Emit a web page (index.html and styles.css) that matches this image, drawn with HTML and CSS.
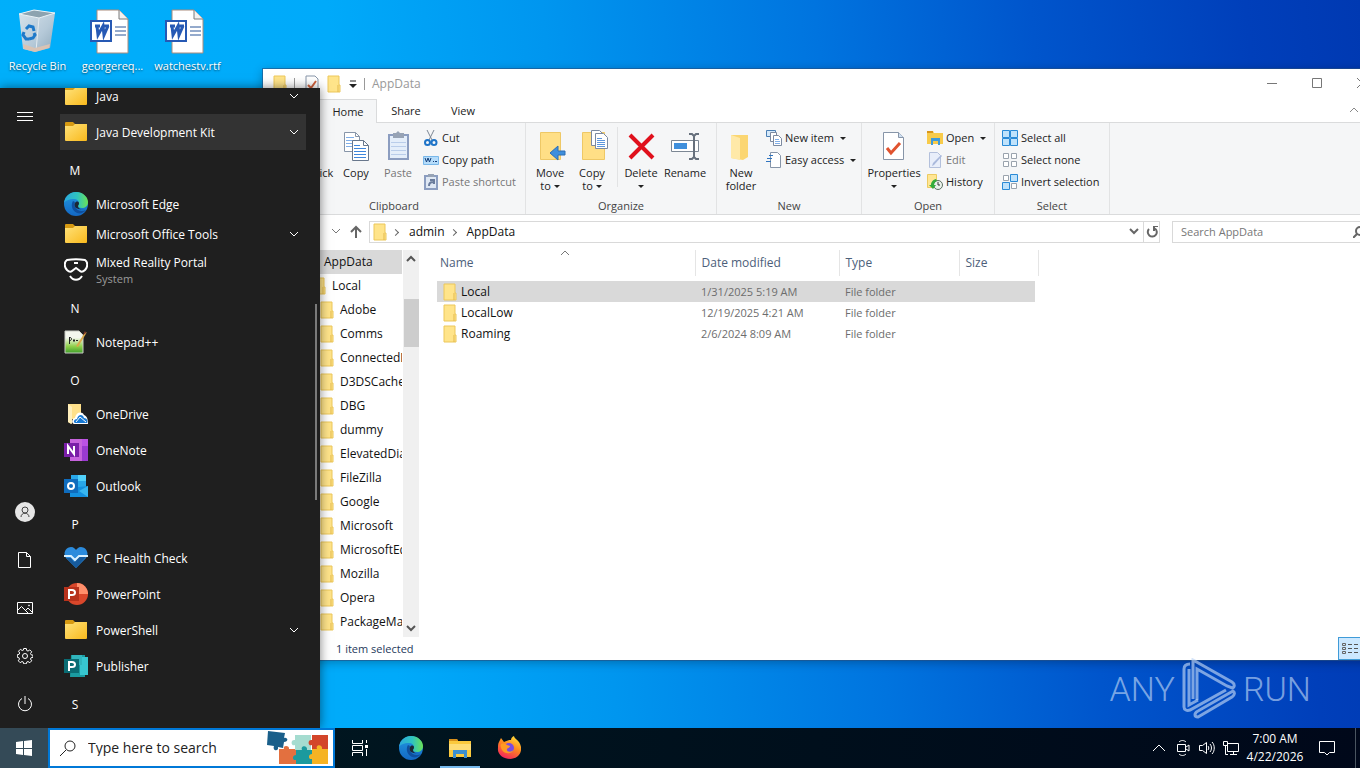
FILE: index.html
```html
<!DOCTYPE html>
<html lang="en">
<head>
    <meta charset="UTF-8" />
    <meta name="viewport" content="width=device-width, initial-scale=1.0" />
    <title>Desktop</title>
    <link rel="stylesheet" href="styles.css">
</head>
<body>
    <!-- Shared icons -->
    <svg class="defs" width="0" height="0" aria-hidden="true">
        <defs>
            <linearGradient id="gFolder" x1="0" y1="0" x2="1" y2="1">
                <stop offset="0" stop-color="#ffe27a" /><stop offset="1" stop-color="#f9b91c" />
            </linearGradient>
            <linearGradient id="gEdgeTop" x1="0" y1="0" x2="1" y2="0">
                <stop offset="0" stop-color="#2ba8dd" /><stop offset="0.55" stop-color="#2fc4c0" /><stop offset="1" stop-color="#6be255" />
            </linearGradient>
            <linearGradient id="gEdgeLeft" x1="0" y1="0" x2="0" y2="1">
                <stop offset="0" stop-color="#2299e0" /><stop offset="1" stop-color="#1368c4" />
            </linearGradient>
            <linearGradient id="gFox" x1="0.8" y1="0" x2="0.3" y2="1">
                <stop offset="0" stop-color="#ffe23c" /><stop offset="0.45" stop-color="#ff8a1e" /><stop offset="1" stop-color="#f4215c" />
            </linearGradient>
            <linearGradient id="gBin" x1="0" y1="0" x2="1" y2="1">
                <stop offset="0" stop-color="#d8e4ec" /><stop offset="0.6" stop-color="#b5c9d8" /><stop offset="1" stop-color="#8fa9bb" />
            </linearGradient>
            <linearGradient id="gNpp" x1="0" y1="0" x2="0" y2="1">
                <stop offset="0.3" stop-color="#f4f7ee" /><stop offset="0.7" stop-color="#8fd04a" /><stop offset="1" stop-color="#3f9e2b" />
            </linearGradient>
        </defs>
        <symbol id="folder" viewBox="0 0 24 24">
            <path d="M1 3a1 1 0 0 1 1-1h7l2 2h11a1 1 0 0 1 1 1v13H1z" fill="#d79a12" />
            <path d="M1 6h8l2-2h12v16a1 1 0 0 1-1 1H2a1 1 0 0 1-1-1z" fill="url(#gFolder)" />
        </symbol>
        <symbol id="sfolder" viewBox="0 0 14 18">
            <path d="M1 1h11v9h1v7H1z" fill="#ffe48a" stroke="#ecc75a" />
            <path d="M11 10v7" stroke="#e3b94c" />
        </symbol>
        <symbol id="edge" viewBox="0 0 24 24">
            <circle cx="12" cy="12" r="12" fill="url(#gEdgeLeft)" />
            <path d="M0 11C1 4 6 0 12 0c7 0 12 5 12 10 0 4-3 6-6 6-3 0-4-1-4-2s1-1 1-3-2-4-5-4C5 7 1 9 0 11z" fill="url(#gEdgeTop)" />
            <path d="M9 9c-2 3-2 9 4 12 3 1 7 0 9-3-4 2-9 1-11-3-1-2-1-3 0-5z" fill="#0f4f9e" />
            <path d="M12 10c-2 1-2 4 0 6 2 1 6 2 9 1-3 1-7 0-7-3 0-1 1-1 1-3 0-1-2-2-3-1z" fill="#1b2733" />
        </symbol>
        <symbol id="chev" viewBox="0 0 10 10">
            <path d="M1 3l4 4 4-4" fill="none" stroke="currentColor" />
        </symbol>
        <symbol id="word" viewBox="0 0 40 46">
            <path d="M7 2h22l9 9v34H7z" fill="#fff" stroke="#a98b7c" />
            <path d="M29 2v9h9" fill="#f1f1f1" stroke="#7b7b7b" />
            <path d="M25 19h11M25 23h11M25 27h11" stroke="#2b579a" />
            <rect x="1" y="13" width="20" height="20" fill="#fff" stroke="#2659b4" stroke-width="2" />
            <path d="M5 18h5M13 18h6M7 18l1 9 5-9 1 9 4-9" fill="none" stroke="#2659b4" stroke-width="3" />
        </symbol>
    </svg>

    <main class="desktop">
        <div class="shortcuts">
            <a href="#" class="shortcut">
                <svg viewBox="0 0 40 46">
                    <path d="M1 6l15-4 21 3-5 35-15 4-12-3z" fill="url(#gBin)" />
                    <path d="M1 6l15-4 21 3-16 5z" fill="#8da3b0" stroke="#e9f1f6" />
                    <path d="M21 10l-3 33" stroke="#e4ebf0" />
                    <path d="M5 36l12 4 15-4-1 4-14 4-11-3z" fill="#d9c3b4" />
                    <path d="M8 21l3-3 4 1 1 4M6 24l-1 3 3 4h3M16 25l1 2-2 3-4 1" fill="none" stroke="#1e79c9" stroke-width="3" />
                </svg>
                <span>Recycle Bin</span>
            </a>
            <a href="#" class="shortcut document">
                <svg viewBox="0 0 40 46"><use href="#word" /></svg>
                <span>georgereq...</span>
            </a>
            <a href="#" class="shortcut document">
                <svg viewBox="0 0 40 46"><use href="#word" /></svg>
                <span>watchestv.rtf</span>
            </a>
        </div>

        <!-- File Explorer -->
        <section class="explorer">
            <header class="titlebar">
                <svg class="sfolder" viewBox="0 0 14 18"><use href="#sfolder" /></svg>
                <i class="bar"></i>
                <svg class="props" viewBox="0 0 14 18">
                    <path d="M1 1h9l3 3v13H1z" fill="#fff" stroke="#8795a8" />
                    <path d="M3 10l3 3 5-7" fill="none" stroke="#d0623e" stroke-width="2" />
                </svg>
                <svg class="sfolder" viewBox="0 0 14 18"><use href="#sfolder" /></svg>
                <svg class="customize" viewBox="0 0 8 8"><path d="M1 1h6" stroke="#222" /><path d="M0 4h8l-4 4z" fill="#222" /></svg>
                <i class="bar"></i>
                <h1>AppData</h1>
                <div class="window-buttons">
                    <button type="button" aria-label="Minimize"><svg viewBox="0 0 10 10"><path d="M0 5.5h10" /></svg></button>
                    <button type="button" aria-label="Maximize"><svg viewBox="0 0 10 10"><path d="M.5.5h9v9h-9z" /></svg></button>
                    <button type="button" aria-label="Close"><svg viewBox="0 0 10 10"><path d="M0 0l10 10M10 0L0 10" /></svg></button>
                </div>
            </header>

            <nav class="tabs">
                <button type="button" class="tab file">File</button>
                <button type="button" class="tab active">Home</button>
                <button type="button" class="tab">Share</button>
                <button type="button" class="tab">View</button>
                <button type="button" class="collapse" aria-label="Minimize the Ribbon"><svg viewBox="0 0 10 10"><path d="M1 7l4-4 4 4" fill="none" stroke="#888" /></svg></button>
            </nav>

            <div class="ribbon">
                <div class="group clipboard">
                    <div class="tools">
                        <button type="button" class="big pin"><svg viewBox="0 0 32 32"><path d="M20 4l8 8-4 1-5 5-1 6-9-9 6-1 5-5z" fill="#5b9bd5" /></svg>Pin to Quick<br>access</button>
                        <button type="button" class="big">
                            <svg viewBox="0 0 32 32">
                                <path d="M4.500 2.500h11l4 4v15h-15z" fill="#fff" stroke="#8795a8" />
                                <path d="M15.500 2.500v4h4" fill="none" stroke="#8795a8" />
                                <path d="M6 7.500h8M6 10.500h10M6 13.500h6M6 16.500h6" stroke="#7faee8" />
                                <path d="M12.500 10.500h11l5 5v15h-16z" fill="#fff" stroke="#68778c" />
                                <path d="M23.500 10.500v5h5" fill="none" stroke="#68778c" />
                                <path d="M14 15.500h6M14 18.500h12M14 21.500h12M14 24.500h12M14 27.500h12" stroke="#3d86dc" />
                            </svg>
                            Copy
                        </button>
                        <button type="button" class="big off">
                            <svg viewBox="0 0 32 32">
                                <rect x="7" y="5" width="19" height="24" fill="#e4eefa" stroke="#8b9dc0" stroke-width="2" />
                                <path d="M11 3h3l2-2 2 2h4v5H11z" fill="#97a3b5" />
                                <path d="M9 12.500h15M9 16.500h15M9 20.500h15M9 24.500h15" stroke="#b9cdea" />
                            </svg>
                            Paste
                        </button>
                        <div class="stack">
                            <button type="button" class="small"><svg viewBox="0 0 16 16"><path d="M4 0l5 10M11 0L6 10" stroke="#7c8794" /><circle cx="4.500" cy="12.500" r="2.500" fill="none" stroke="#1f74c8" stroke-width="2" /><circle cx="11" cy="12.500" r="2.500" fill="none" stroke="#1f74c8" stroke-width="2" /></svg>Cut</button>
                            <button type="button" class="small"><svg viewBox="0 0 16 16"><path d="M.5 4.500h15v8H.5z" fill="#b5dcfa" stroke="#79b8ea" /><path d="M2 6l1.500 4 1.500-4 1.500 4L8 6M10 9.500h1M12 9.500h2" fill="none" stroke="#123c78" /></svg>Copy path</button>
                            <button type="button" class="small off"><svg viewBox="0 0 16 16"><path d="M2 2h12v13H2z" fill="#dfe8f4" stroke="#8b9dc0" stroke-width="2" /><path d="M5 0h6v3H5z" fill="#97a3b5" /><path d="M6 12c0-3 1-4 4-4M7 6h4v4" fill="none" stroke="#6a7c9c" stroke-width="2" /></svg>Paste shortcut</button>
                        </div>
                    </div>
                    <p>Clipboard</p>
                </div>

                <div class="group organize">
                    <div class="tools">
                        <button type="button" class="big">
                            <svg viewBox="0 0 32 32"><path d="M6.500 2.500h20v27h-20z" fill="#ffdf86" stroke="#eec866" /><path d="M31 21h-7v-5l-8 7 8 7v-5h7z" fill="#3f8fdc" stroke="#2f6fb4" /></svg>
                            Move<br>to <i class="caret"></i>
                        </button>
                        <button type="button" class="big">
                            <svg viewBox="0 0 32 32"><path d="M6.500 2.500h22v27h-22z" fill="#ffdf86" stroke="#eec866" /><path d="M15.500.5h8l3 3v12h-11z" fill="#fff" stroke="#7c8aa0" /><path d="M19.500 3.500h8l4 4v11h-12z" fill="#fff" stroke="#7c8aa0" /><path d="M21 8.500h5M21 10.500h8M21 12.500h8M21 14.500h8M21 16.500h8" stroke="#5d97dd" /></svg>
                            Copy<br>to <i class="caret"></i>
                        </button>
                        <i class="divider"></i>
                        <button type="button" class="big">
                            <svg viewBox="0 0 32 32"><path d="M5 5l23 23M28 5L5 28" stroke="#e0101c" stroke-width="4" /></svg>
                            Delete<br><i class="caret"></i>
                        </button>
                        <button type="button" class="big rename">
                            <svg viewBox="0 0 32 32"><path d="M2.500 10.500h27v11h-27z" fill="#fff" stroke="#7c8794" /><path d="M5 13h13v6H5z" fill="#3f8fdc" /><path d="M20 4h3l2 2 2-2h3M25 6v21M20 29h3l2-2 2 2h3" fill="none" stroke="#66707c" stroke-width="2" /></svg>
                            Rename
                        </button>
                    </div>
                    <p>Organize</p>
                </div>

                <div class="group new">
                    <div class="tools">
                        <button type="button" class="big">
                            <svg viewBox="0 0 32 32"><path d="M6 5h17v22l-5 3-12-2z" fill="#fbd672" /><path d="M6 5l9 3v22l-9-2z" fill="#ffe9a8" /></svg>
                            New<br>folder
                        </button>
                        <div class="stack">
                            <button type="button" class="small"><svg viewBox="0 0 16 16"><path d="M.5.500h9v6h-9z" fill="#d5e9fa" stroke="#4b7fb4" /><path d="M4.500 2.500h6v9h-6z" fill="#fff" stroke="#7c8aa0" /><path d="M7.500 5.500h5l3 3v7h-8z" fill="#fff" stroke="#7c8aa0" /><path d="M9 9.500h4M9 11.500h5M9 13.500h5" stroke="#7faee8" /></svg>New item <i class="caret"></i></button>
                            <button type="button" class="small"><svg viewBox="0 0 16 16"><path d="M4.500.5h7l3 3v12h-10z" fill="#fff" stroke="#8795a8" /><path d="M7 3.500H3M6 6.500H1M5 9.500H0" stroke="#2f74c0" /></svg>Easy access <i class="caret"></i></button>
                        </div>
                    </div>
                    <p>New</p>
                </div>

                <div class="group open">
                    <div class="tools">
                        <button type="button" class="big wide">
                            <svg viewBox="0 0 32 32"><path d="M5.500 2.500h15l5 5v22h-20z" fill="#fff" stroke="#8795a8" /><path d="M20.500 2.500v5h5" fill="#cfe0f2" stroke="#8795a8" /><path d="M9 18l4 5 9-10" fill="none" stroke="#e0532f" stroke-width="3" /></svg>
                            Properties<br><i class="caret"></i>
                        </button>
                        <div class="stack">
                            <button type="button" class="small"><svg viewBox="0 0 16 16"><path d="M0 1h6l1 2h9v11H0z" fill="#f8cb4a" /><path d="M0 1h6v2H0z" fill="#d9961a" /><path d="M4 15V8h9v7h-2v-4H6v4z" fill="#3f9ad8" /></svg>Open <i class="caret"></i></button>
                            <button type="button" class="small off"><svg viewBox="0 0 16 16"><path d="M2.500.5h8l3 3v12h-11z" fill="#e8eefa" stroke="#b3c0dc" /><path d="M15 4L7 13l-2 1 1-3 8-8z" fill="#a9b9dc" /></svg>Edit</button>
                            <button type="button" class="small"><svg viewBox="0 0 16 16"><path d="M.5.5h9v13h-9z" fill="#ffe694" stroke="#eccb62" /><circle cx="11" cy="11" r="4.500" fill="#e9f1ea" stroke="#5c6f62" /><path d="M11 8v3h2" fill="none" stroke="#333" /><path d="M9 5c-4 1-5 4-5 6H2l4 4 3-4H7c0-2 1-3 3-4z" fill="#34ac3a" /></svg>History</button>
                        </div>
                    </div>
                    <p>Open</p>
                </div>

                <div class="group select">
                    <div class="tools">
                        <div class="stack">
                            <button type="button" class="small"><svg viewBox="0 0 16 16"><path d="M.5.5h7v7h-7zM8.500.5h7v7h-7zM.5 8.500h7v7h-7zM8.500 8.500h7v7h-7z" fill="#bfe2fb" stroke="#2a8ad6" /></svg>Select all</button>
                            <button type="button" class="small"><svg viewBox="0 0 16 16"><path d="M1.500 1.500h5v5h-5zM9.500 1.500h5v5h-5zM1.500 9.500h5v5h-5zM9.500 9.500h5v5h-5z" fill="#fff" stroke="#9aa3ad" /></svg>Select none</button>
                            <button type="button" class="small"><svg viewBox="0 0 16 16"><path d="M1.500 1.500h5v5h-5zM9.500 9.500h5v5h-5z" fill="#fff" stroke="#9aa3ad" /><path d="M8.500.5h7v7h-7zM.5 8.500h7v7h-7z" fill="#bfe2fb" stroke="#2a8ad6" /></svg>Invert selection</button>
                        </div>
                    </div>
                    <p>Select</p>
                </div>
            </div>

            <div class="address">
                <button type="button" class="recent" aria-label="Recent locations"><svg viewBox="0 0 10 10"><use href="#chev" /></svg></button>
                <button type="button" class="up" aria-label="Up"><svg viewBox="0 0 12 14"><path d="M6 13V2M1 7l5-5 5 5" fill="none" stroke="#666" stroke-width="2" /></svg></button>
                <div class="path">
                    <svg class="sfolder" viewBox="0 0 14 18"><use href="#sfolder" /></svg>
                    <i class="sep"></i><a href="#">admin</a><i class="sep"></i><a href="#">AppData</a>
                    <button type="button" class="drop" aria-label="Previous locations"><svg viewBox="0 0 10 10"><path d="M1 3l4 4 4-4" fill="none" stroke="#666" stroke-width="2" /></svg></button>
                    <button type="button" class="refresh" aria-label="Refresh"><svg viewBox="0 0 12 12"><path d="M3 3a4.500 4.500 0 1 0 6-0.500" fill="none" stroke="#666" stroke-width="2" /><path d="M7 0h5v1H9v4H7z" fill="#666" /></svg></button>
                </div>
                <div class="find">
                    <input type="search" placeholder="Search AppData" aria-label="Search AppData">
                    <svg viewBox="0 0 12 12"><circle cx="7" cy="5" r="4" fill="none" stroke="#666" stroke-width="2" /><path d="M4 8l-4 4" stroke="#666" stroke-width="2" /></svg>
                </div>
            </div>

            <div class="panes">
                <ul class="tree">
                    <li class="level1 current"><a href="#">AppData</a></li>
                    <li class="level2"><a href="#"><svg class="sfolder" viewBox="0 0 14 18"><use href="#sfolder" /></svg>Local</a></li>
                    <li><a href="#"><svg class="sfolder" viewBox="0 0 14 18"><use href="#sfolder" /></svg>Adobe</a></li>
                    <li><a href="#"><svg class="sfolder" viewBox="0 0 14 18"><use href="#sfolder" /></svg>Comms</a></li>
                    <li><a href="#"><svg class="sfolder" viewBox="0 0 14 18"><use href="#sfolder" /></svg>ConnectedDevicesPlatform</a></li>
                    <li><a href="#"><svg class="sfolder" viewBox="0 0 14 18"><use href="#sfolder" /></svg>D3DSCache</a></li>
                    <li><a href="#"><svg class="sfolder" viewBox="0 0 14 18"><use href="#sfolder" /></svg>DBG</a></li>
                    <li><a href="#"><svg class="sfolder" viewBox="0 0 14 18"><use href="#sfolder" /></svg>dummy</a></li>
                    <li><a href="#"><svg class="sfolder" viewBox="0 0 14 18"><use href="#sfolder" /></svg>ElevatedDiagnostics</a></li>
                    <li><a href="#"><svg class="sfolder" viewBox="0 0 14 18"><use href="#sfolder" /></svg>FileZilla</a></li>
                    <li><a href="#"><svg class="sfolder" viewBox="0 0 14 18"><use href="#sfolder" /></svg>Google</a></li>
                    <li><a href="#"><svg class="sfolder" viewBox="0 0 14 18"><use href="#sfolder" /></svg>Microsoft</a></li>
                    <li><a href="#"><svg class="sfolder" viewBox="0 0 14 18"><use href="#sfolder" /></svg>MicrosoftEdge</a></li>
                    <li><a href="#"><svg class="sfolder" viewBox="0 0 14 18"><use href="#sfolder" /></svg>Mozilla</a></li>
                    <li><a href="#"><svg class="sfolder" viewBox="0 0 14 18"><use href="#sfolder" /></svg>Opera</a></li>
                    <li><a href="#"><svg class="sfolder" viewBox="0 0 14 18"><use href="#sfolder" /></svg>PackageManagement</a></li>
                </ul>
                <div class="scrollbar">
                    <svg viewBox="0 0 10 10"><path d="M1 7l4-4 4 4" fill="none" stroke="#555" stroke-width="2" /></svg>
                    <div class="thumb"></div>
                    <svg viewBox="0 0 10 10"><path d="M1 3l4 4 4-4" fill="none" stroke="#555" stroke-width="2" /></svg>
                </div>
                <div class="files">
                    <table>
                        <thead>
                            <tr>
                                <th class="name">Name<svg class="sort" viewBox="0 0 10 10"><path d="M1 7l4-4 4 4" fill="none" stroke="#777" /></svg></th>
                                <th class="date">Date modified</th>
                                <th class="type">Type</th>
                                <th class="size">Size</th>
                            </tr>
                        </thead>
                        <tbody>
                            <tr class="selected">
                                <td><a href="#"><svg class="sfolder" viewBox="0 0 14 18"><use href="#sfolder" /></svg>Local</a></td>
                                <td>1/31/2025 5:19 AM</td><td>File folder</td><td></td>
                            </tr>
                            <tr>
                                <td><a href="#"><svg class="sfolder" viewBox="0 0 14 18"><use href="#sfolder" /></svg>LocalLow</a></td>
                                <td>12/19/2025 4:21 AM</td><td>File folder</td><td></td>
                            </tr>
                            <tr>
                                <td><a href="#"><svg class="sfolder" viewBox="0 0 14 18"><use href="#sfolder" /></svg>Roaming</a></td>
                                <td>2/6/2024 8:09 AM</td><td>File folder</td><td></td>
                            </tr>
                        </tbody>
                    </table>
                </div>
            </div>

            <footer class="status">
                <span>1 item selected</span>
                <button type="button" aria-label="Details view">
                    <svg viewBox="0 0 16 14"><path d="M.5 1.500h3v2h-3zM.5 5.500h3v2h-3zM.5 9.500h3v2h-3z" fill="none" stroke="#666" /><path d="M6 2.500h4M6 6.500h4M6 10.500h4M12 2.500h4M12 6.500h4M12 10.500h4" stroke="#555" /></svg>
                </button>
            </footer>
        </section>

        <!-- Watermark -->
        <div class="watermark">
            <span>ANY</span>
            <svg viewBox="0 0 54 62" fill="none" stroke="currentColor" stroke-width="3">
                <path d="M11 41V2l39 22c3 2 3 5 0 6l-5-2-30-17v31" />
                <path d="M8 6c-4 0-6 2-6 5v38c0 3 3 4 6 3l36-20" />
                <path d="M7 11v36l9-5" />
                <path d="M51 33L16 53c-4 2-4 6 0 6l34-20c3-2 3-5 1-6z" />
            </svg>
            <span>RUN</span>
        </div>

        <!-- Start menu -->
        <section class="start-menu">
            <nav class="rail">
                <button type="button" aria-label="Start"><svg viewBox="0 0 16 16"><path d="M0 3.500h16M0 7.500h16M0 11.500h16" /></svg></button>
                <button type="button" class="push" aria-label="Account"><svg class="avatar" viewBox="0 0 20 20"><circle cx="10" cy="10" r="10" fill="#e6e6e6" stroke="none" /><circle cx="10" cy="8" r="3" stroke="#444" /><path d="M6 15c0-5 8-5 8 0" stroke="#444" /></svg></button>
                <button type="button" aria-label="Documents"><svg viewBox="0 0 16 16"><path d="M1.500.5h8l4 4v11h-12zM9.500.5v4h4" /></svg></button>
                <button type="button" aria-label="Pictures"><svg viewBox="0 0 16 16"><path d="M.5 2.500h15v11H.5zM.5 10.500l4-4 7 7M9 10l2-2 4 4" /><circle cx="12" cy="5.500" r=".5" /></svg></button>
                <button type="button" aria-label="Settings"><svg viewBox="0 0 16 16"><path d="M6.700.5h2.600l.4 2 1.300.6 1.800-1.200 1.900 1.900-1.200 1.800.6 1.200 1.900.4v2.100l-1.900.4-.6 1.300 1.200 1.800-1.900 1.900-1.800-1.200-1.300.6-.4 1.700H6.700l-.4-1.700-1.300-.6-1.800 1.200-1.900-1.900L2.500 11l-.6-1.300-1.600-.4V6.700l1.800-.4.6-1.300-1.200-1.800 1.900-1.900L5.200 2.500l1.100-.3z" /><circle cx="8" cy="8" r="2.500" /></svg></button>
                <button type="button" aria-label="Power"><svg viewBox="0 0 16 16"><path d="M8 0v8M5 2.500a6.500 6.500 0 1 0 6 0" /></svg></button>
            </nav>
            <ul class="apps">
                <li><a href="#"><svg viewBox="0 0 24 24"><use href="#folder" /></svg>Java<svg class="chev" viewBox="0 0 10 10"><use href="#chev" /></svg></a></li>
                <li class="hover"><a href="#"><svg viewBox="0 0 24 24"><use href="#folder" /></svg>Java Development Kit<svg class="chev" viewBox="0 0 10 10"><use href="#chev" /></svg></a></li>
                <li class="letter">M</li>
                <li><a href="#"><svg viewBox="0 0 24 24"><use href="#edge" /></svg>Microsoft Edge</a></li>
                <li class="tight"><a href="#"><svg viewBox="0 0 24 24"><use href="#folder" /></svg>Microsoft Office Tools<svg class="chev" viewBox="0 0 10 10"><use href="#chev" /></svg></a></li>
                <li><a href="#">
                    <svg viewBox="0 0 24 24" fill="none" stroke="#fff" stroke-width="2"><path d="M3 2c6-1 12-1 18 0 3 2 3 7 0 10-2 2-4 2-5 1l-4-3-4 3c-1 1-3 1-5-1C0 9 0 4 3 2zM10 5h4M6 18c3 5 9 5 12 0" /></svg>
                    <span>Mixed Reality Portal<small>System</small></span></a></li>
                <li class="letter">N</li>
                <li><a href="#">
                    <svg viewBox="0 0 24 24"><path d="M1 1h14l4 4v18H1z" fill="url(#gNpp)" stroke="#c9ccc4" /><path d="M5.500 7v7M6 7.500c2 0 2 3 0 3M9 10.500h2M12 10.500h2M10 9v3" fill="none" stroke="#222" /><path d="M12 16l8-12 3-2-9 15z" fill="#d9a84a" /><path d="M19 5l2-4 1 2z" fill="#8b3b2a" /></svg>
                    Notepad++</a></li>
                <li class="letter">O</li>
                <li><a href="#">
                    <svg viewBox="0 0 24 24"><path d="M4 2h13v15H8l-1 5-3-2z" fill="#ffe08a" /><path d="M4 2l4 3v17l-4-2z" fill="#ffefbc" /><path d="M10 22c-3-1-2-6 1-6 1-6 7-7 9-3 3 1 4 4 4 9z" fill="#fff" /><path d="M11 21c-2-1-1-4 2-4 1-5 6-5 7-1 3 0 4 3 3 5z" fill="#1779d4" /><path d="M12 20l4-5 6 5" fill="none" stroke="#fff" /></svg>
                    OneDrive</a></li>
                <li><a href="#">
                    <svg viewBox="0 0 24 24"><path d="M6 1h18v22H6z" fill="#c663dc" /><path d="M18 1h6v22h-6z" fill="#9a3ad0" /><path d="M18 1h6v7h-6z" fill="#bb52e4" /><path d="M0 5h15v14H0z" fill="#7a1ea8" /><path d="M4 16V8l6 8V8" fill="none" stroke="#fff" stroke-width="2" /></svg>
                    OneNote</a></li>
                <li><a href="#">
                    <svg viewBox="0 0 24 24"><path d="M7 1h15v12H7z" fill="#28a8ea" /><path d="M14 1h8v6h-8z" fill="#50d0fa" /><path d="M6 13h9l9-1v11H6z" fill="#1490df" /><path d="M15 17l9-5v11z" fill="#38b6f0" /><path d="M0 5h14v14H0z" fill="#0f6cbd" /><circle cx="7" cy="12" r="3" fill="none" stroke="#fff" stroke-width="2" /></svg>
                    Outlook</a></li>
                <li class="letter">P</li>
                <li><a href="#">
                    <svg viewBox="0 0 24 24"><path d="M12 22L2 12C-2 6 3 1 7 1c3 0 4 2 5 3 1-1 2-3 5-3 4 0 9 5 5 11z" fill="#2b8bdc" /><path d="M12 22L2 12h5l3 4 4-5h8z" fill="#165a9c" /><path d="M0 10h7l4 4 4-4h9" fill="none" stroke="#d9f1ff" stroke-width="2" /></svg>
                    PC Health Check</a></li>
                <li><a href="#">
                    <svg viewBox="0 0 24 24"><circle cx="13" cy="12" r="11" fill="#d9472b" /><path d="M13 1a11 11 0 0 1 11 11H13z" fill="#ff8f6b" /><path d="M0 5h15v14H0z" fill="#b7321c" /><path d="M5 17V8h3c4 0 4 5 0 5H5" fill="none" stroke="#fff" stroke-width="2" /></svg>
                    PowerPoint</a></li>
                <li><a href="#"><svg viewBox="0 0 24 24"><use href="#folder" /></svg>PowerShell<svg class="chev" viewBox="0 0 10 10"><use href="#chev" /></svg></a></li>
                <li><a href="#">
                    <svg viewBox="0 0 24 24"><path d="M7 1h14v22H6z" fill="#1a9ba1" /><path d="M16 3h8v18h-8z" fill="#37c6d0" /><path d="M8 1h10v10H8z" fill="#31b5bd" /><path d="M0 5h15v14H0z" fill="#0a6c74" /><path d="M5 17V8h3c4 0 4 5 0 5H5" fill="none" stroke="#fff" stroke-width="2" /></svg>
                    Publisher</a></li>
                <li class="letter">S</li>
                <li class="tight"><a href="#"><span class="blank"></span>Settings</a></li>
            </ul>
            <div class="menu-thumb"></div>
        </section>
    </main>

    <!-- Taskbar -->
    <footer class="taskbar">
        <button type="button" class="start" aria-label="Start"><svg viewBox="0 0 16 16" fill="#fff"><path d="M0 2l7-1v7H0zM8 1l8-1v8H8zM0 9h7v6l-7-1zM8 9h8v7l-8-1z" /></svg></button>
        <div class="search">
            <svg class="lens" viewBox="0 0 16 16"><circle cx="10" cy="6" r="5" fill="none" stroke="#222" /><path d="M6 10l-6 6" stroke="#222" /></svg>
            <input type="text" placeholder="Type here to search" aria-label="Type here to search">
            <svg class="puzzle" viewBox="0 0 64 36">
                <path d="M13 19h5c-2-4 6-4 5 0h9v15H13z" fill="#e3703f" />
                <path d="M29 5h16v15H35c1 4-6 4-4 0h-2v-5c-4 2-5-6 0-5z" fill="#a5dcd0" />
                <path d="M46 5h16v15H46v-5c-4 2-5-6 0-5z" fill="#d3452a" />
                <path d="M30 20h6c-2-5 6-5 5 0h5v14H30v-4c-4 1-4-5 0-5z" fill="#1b9a9e" />
                <path d="M46 19h5c-2-5 6-5 5 0h6v15H46v-5c-4 1-4-5 0-5z" fill="#f5b324" />
                <path d="M2 1l17 2-1 5c4-1 5 4 0 4l-1 6-5-1c1 5-6 4-4-1l-7-1z" fill="#1a5f8a" />
            </svg>
        </div>
        <div class="tasks">
            <button type="button" aria-label="Task View"><svg class="view" viewBox="0 0 16 16" fill="none" stroke="#fff"><path d="M.5 0v3.500h10V0M.5 5.500h10v5H.5zM.5 16v-3.500h10V16M14.500 0v3M14.500 9v7" /><path d="M13 5h3v3h-3z" fill="#fff" stroke="none" /></svg></button>
            <button type="button" aria-label="Microsoft Edge"><svg viewBox="0 0 24 24"><use href="#edge" /></svg></button>
            <button type="button" class="running" aria-label="File Explorer"><svg viewBox="0 0 24 24"><path d="M1 3h8l1 2h13v16H1z" fill="#fbc93d" /><path d="M1 3h8l1 2H1z" fill="#d9901a" /><path d="M1 8h22v6H1z" fill="#ffdd75" /><path d="M5 22v-8h14v8h-3v-4H8v4z" fill="#3c8fd0" /></svg></button>
            <button type="button" aria-label="Firefox"><svg viewBox="0 0 24 24"><path d="M2 6l2-4 3 4c3-1 4-2 7-2 0-2 1-3 3-4 0 3 6 4 7 11 1 8-5 12-11 12S0 19 1 12c0-3 0-4 1-6z" fill="url(#gFox)" /><circle cx="12" cy="12" r="5" fill="#7a4be0" /><path d="M4 8c3-1 5 0 6 1l3 1c0 2-3 2-3 3-1 3 5 4 7 0-1 5-9 6-12 1-1-2-2-4-1-6z" fill="#ff9a22" /></svg></button>
        </div>
        <div class="tray">
            <button type="button" aria-label="Show hidden icons"><svg viewBox="0 0 12 12"><path d="M0 9l6-6 6 6" /></svg></button>
            <button type="button" aria-label="Meet Now"><svg viewBox="0 0 16 16"><path d="M2.500 4.500h8v7h-8zM11 7l3-2v6l-3-2M4 2c2-2 5-2 7 0M4 14c2 2 5 2 7 0" /></svg></button>
            <button type="button" aria-label="Volume"><svg viewBox="0 0 16 16"><path d="M.5 5.500h3l4-3v11l-4-3h-3zM9 6c1 1 1 3 0 4M11 4c2 2 2 6 0 8M13 2c3 3 3 9 0 12" /></svg></button>
            <button type="button" aria-label="Network"><svg viewBox="0 0 16 16"><path d="M4.500 3.500h11v8h-11zM7 14.500h7M10.500 12v2M.5 1.500h4v4h-4zM2.500 6v8.500H5" /></svg></button>
            <button type="button" class="clock"><time>7:00 AM</time><time>4/22/2026</time></button>
            <button type="button" class="notes" aria-label="Notifications"><svg viewBox="0 0 16 16"><path d="M.5 1.500h15v11h-5L8 15l-2.500-2.500h-5z" /></svg></button>
            <button type="button" class="show-desktop" aria-label="Show desktop"></button>
        </div>
    </footer>
</body>
</html>
```

FILE: styles.css
```css
* {
    box-sizing: border-box;
}

body {
    font-family: 'Segoe UI', 'Open Sans', 'Noto Sans', sans-serif;
    font-size: 12px;
    line-height: 16px;
    margin: 0;
    height: 100vh;
    display: flex;
    flex-direction: column;
    overflow: hidden;
    color: #222;
}

button {
    font: inherit;
    color: inherit;
    background: none;
    border: none;
    padding: 0;
}

a {
    color: inherit;
    text-decoration: none;
}

ul {
    list-style: none;
    margin: 0;
    padding: 0;
}

svg {
    flex: none;
}

.defs {
    position: absolute;
}

.sfolder {
    width: 14px;
    height: 18px;
}

.caret {
    display: inline-block;
    border: 3px solid transparent;
    border-top-color: #222;
    border-bottom: none;
    margin-bottom: 2px;
}

/* Desktop */
.desktop {
    position: relative;
    flex: 1;
    overflow: hidden;
    background: linear-gradient(84deg, #00b0fa 0%, #00aafa 28%, #0096ef 43%, #0074df 62%, #0055cc 77%, #003fba 92%, #0039b2 100%);
}

.shortcuts {
    display: flex;
    padding-top: 8px;
}

.shortcut {
    width: 75px;
    display: flex;
    flex-direction: column;
    align-items: center;
    font-size: 11px;
    color: white;
    text-shadow: 0 1px 2px rgba(0, 0, 0, 0.6);
}

    .shortcut svg {
        width: 40px;
        height: 46px;
        margin-bottom: 4px;
    }

    .shortcut.document svg {
        margin-right: 6px;
    }

/* File Explorer */
.explorer {
    position: absolute;
    left: 263px;
    top: 69px;
    width: 1122px;
    height: 591px;
    display: flex;
    flex-direction: column;
    background: white;
    box-shadow: 0 0 0 1px rgba(40, 80, 130, 0.6), 0 2px 10px rgba(0, 0, 0, 0.3);
}

.titlebar {
    height: 30px;
    display: flex;
    align-items: center;
    padding: 0 1px 0 10px;
}

    .titlebar h1 {
        margin: 0 0 0 7px;
        font-size: 12px;
        font-weight: normal;
        color: #999;
    }

.bar {
    width: 1px;
    height: 12px;
    margin-left: 7px;
    background: #999;
}

.props {
    width: 14px;
    height: 18px;
    margin: 0 8px 0 10px;
}

.customize {
    width: 8px;
    height: 8px;
    margin-left: 8px;
}

.window-buttons {
    display: flex;
    margin-left: auto;
}

    .window-buttons button {
        width: 45px;
        height: 28px;
    }

    .window-buttons svg {
        width: 10px;
        height: 10px;
        fill: none;
        stroke: #777;
    }

.tabs {
    display: flex;
    height: 24px;
    font-size: 11px;
    border-bottom: 1px solid #dadbdc;
}

.tab {
    width: 56px;
    height: 24px;
}

    .tab.file {
        background: #1979ca;
        color: white;
    }

    .tab.active {
        width: 58px;
        background: #f5f6f7;
        border: 1px solid #dadbdc;
        border-bottom: none;
    }

.tabs .tab:nth-child(3) {
    width: 58px;
}

.collapse {
    margin: 0 26px 0 auto;
}

    .collapse svg {
        width: 10px;
        height: 10px;
    }

.ribbon {
    display: flex;
    height: 92px;
    font-size: 11px;
    background: #f5f6f7;
    border-bottom: 1px solid #dadbdc;
}

.group {
    display: flex;
    flex-direction: column;
    justify-content: space-between;
    border-right: 1px solid #e2e3e4;
}

    .group p {
        margin: 0;
        text-align: center;
        color: #444;
    }

.clipboard {
    width: 263px;
}

.organize {
    width: 191px;
}

.new {
    width: 145px;
}

.open {
    width: 133px;
}

.select {
    width: 115px;
}

.tools {
    display: flex;
    align-items: flex-start;
    padding: 4px 0 0 3px;
}

.big {
    width: 42px;
    display: block;
    line-height: 13px;
    text-align: center;
    white-space: nowrap;
}

    .big svg {
        display: block;
        width: 32px;
        height: 32px;
        margin: 3px auto 4px;
    }

    .big.pin {
        width: 69px;
        padding-left: 4px;
    }

    .big.rename {
        width: 46px;
    }

    .big.wide {
        width: 58px;
    }

.off {
    color: #777;
}

.divider {
    width: 1px;
    height: 60px;
    margin: 0 2px 0 4px;
    background: #e2e3e4;
}

.stack {
    display: flex;
    flex-direction: column;
    padding-left: 4px;
}

.small {
    height: 22px;
    display: flex;
    align-items: center;
    white-space: nowrap;
}

    .small svg {
        width: 16px;
        height: 16px;
        margin-right: 3px;
    }

    .small .caret {
        margin: 0 0 0 6px;
    }

.address {
    display: flex;
    align-items: center;
    height: 34px;
    padding: 0 8px 0 68px;
}

.recent svg, .drop svg {
    width: 10px;
    height: 10px;
    color: #777;
}

.up {
    margin: 0 7px 0 9px;
}

    .up svg {
        display: block;
        width: 12px;
        height: 14px;
    }

.path {
    flex: 1;
    height: 22px;
    display: flex;
    align-items: center;
    padding-left: 3px;
    border: 1px solid #d9d9d9;
    color: #111;
}

.sep {
    width: 5px;
    height: 5px;
    margin: 0 11px 0 6px;
    border: 1px solid #666;
    border-width: 1px 1px 0 0;
    transform: rotate(45deg);
}

.drop {
    margin-left: auto;
    width: 18px;
}

.refresh {
    width: 16px;
    height: 20px;
    border-left: 1px solid #d9d9d9;
}

    .refresh svg {
        display: block;
        margin: 0 auto;
        width: 12px;
        height: 12px;
    }

.find {
    width: 205px;
    height: 22px;
    display: flex;
    align-items: center;
    margin-left: 12px;
    border: 1px solid #d9d9d9;
}

    .find input {
        width: 180px;
        border: none;
        outline: none;
        padding: 0 0 0 8px;
        font: inherit;
        font-size: 11px;
        background: none;
    }

    .find input::placeholder {
        color: #777;
    }

    .find svg {
        width: 12px;
        height: 12px;
    }

.panes {
    flex: 1;
    display: flex;
    min-height: 0;
    padding-top: 1px;
}

.tree {
    width: 139px;
    overflow: hidden;
    color: #111;
}

    .tree li {
        height: 24px;
        padding-left: 57px;
    }

    .tree .level2 {
        padding-left: 49px;
    }

    .tree .level1 {
        padding-left: 61px;
    }

    .tree a {
        display: flex;
        align-items: center;
        height: 24px;
        white-space: nowrap;
    }

    .tree .sfolder {
        margin-right: 6px;
    }

.current {
    background: #d9d9d9;
}

.scrollbar {
    width: 16px;
    margin-left: 1px;
    display: flex;
    flex-direction: column;
    align-items: center;
    justify-content: space-between;
    padding: 4px 0;
    background: #f0f0f0;
}

    .scrollbar svg {
        width: 10px;
        height: 10px;
    }

.thumb {
    width: 15px;
    height: 48px;
    margin-bottom: 241px;
    background: #cdcdcd;
}

.files {
    padding-left: 18px;
}

table {
    width: 602px;
    table-layout: fixed;
    border-collapse: collapse;
    color: #6d6d6d;
}

th {
    position: relative;
    height: 26px;
    padding: 0 0 0 6px;
    border-right: 1px solid #e5e5e5;
    text-align: left;
    font-weight: normal;
    color: #4c607a;
}

th.name {
    width: 258px;
    padding-left: 3px;
}

th.date {
    width: 144px;
}

th.type {
    width: 120px;
}

.sort {
    position: absolute;
    left: 123px;
    top: -2px;
    width: 10px;
    height: 10px;
}

tbody::before {
    content: "";
    display: block;
    height: 5px;
}

td {
    height: 21px;
    padding: 0 0 0 6px;
    font-size: 11px;
}

    td a {
        display: flex;
        align-items: center;
        height: 21px;
        font-size: 12px;
        color: #111;
    }

    td .sfolder {
        margin-right: 4px;
    }

.selected {
    background: linear-gradient(#d9d9d9, #d9d9d9) no-repeat 0 0 / 598px 100%;
}

.status {
    display: flex;
    align-items: center;
    height: 23px;
    padding: 0 23px 0 73px;
    font-size: 11px;
    color: #1e395b;
}

    .status button {
        width: 24px;
        height: 23px;
        margin-left: auto;
        border: 1px solid #3f9bd8;
        background: #cce8ff;
    }

    .status svg {
        display: block;
        width: 16px;
        height: 14px;
        margin-left: 3px;
    }

/* Watermark */
.watermark {
    position: absolute;
    right: 49px;
    bottom: 8px;
    display: flex;
    align-items: center;
    gap: 7px;
    font-family: 'Roboto', sans-serif;
    font-size: 34px;
    font-weight: 300;
    line-height: 62px;
    color: rgba(190, 214, 245, 0.65);
}

    .watermark svg {
        width: 54px;
        height: 62px;
    }

/* Start menu */
.start-menu {
    position: absolute;
    left: 0;
    bottom: 0;
    width: 320px;
    height: 640px;
    display: flex;
    overflow: hidden;
    background: #1f1f1f;
    color: white;
    box-shadow: 0 0 10px rgba(0, 0, 0, 0.5);
}

.rail {
    width: 50px;
    display: flex;
    flex-direction: column;
    padding-top: 5px;
}

    .rail button {
        height: 48px;
        display: flex;
        align-items: center;
        justify-content: center;
    }

    .rail .push {
        margin-top: auto;
    }

    .rail svg {
        width: 16px;
        height: 16px;
        fill: none;
        stroke: white;
    }

    .rail .avatar {
        width: 20px;
        height: 20px;
    }

.apps {
    width: 246px;
    margin: -10px 0 0 10px;
}

    .apps li {
        height: 36px;
    }

    .apps a {
        display: flex;
        align-items: center;
        height: 36px;
        padding: 2px 7px 0 4px;
    }

    .apps a > svg:first-child, .blank {
        width: 24px;
        height: 24px;
        margin: 0 8px 2px 0;
    }

    .apps small {
        display: block;
        font-size: 11px;
        color: #9a9a9a;
    }

    .apps .chev {
        width: 10px;
        height: 10px;
        margin: 0 0 2px auto;
    }

    .apps .hover {
        background: #333;
    }

    .apps .letter {
        width: 30px;
        padding-top: 13px;
        text-align: center;
    }

    .apps .tight {
        margin-top: -6px;
    }

.menu-thumb {
    width: 2px;
    height: 196px;
    margin: 216px 0 0 9px;
    background: #7a7a7a;
}

/* Taskbar */
.taskbar {
    height: 40px;
    display: flex;
    background: linear-gradient(90deg, #001a22, #000f1c 60%, #00081a);
    color: white;
}

.start {
    width: 48px;
    background: #344a57;
}

    .start svg {
        display: block;
        width: 16px;
        height: 16px;
        margin: 0 auto;
    }

.search {
    width: 287px;
    display: flex;
    align-items: center;
    padding-left: 10px;
    border: 2px solid #0078d7;
    background: white;
}

    .search input {
        width: 160px;
        margin-left: 12px;
        padding: 0;
        border: none;
        outline: none;
        font: inherit;
        font-size: 14px;
    }

    .search input::placeholder {
        color: #222;
    }

.lens {
    width: 16px;
    height: 16px;
}

.puzzle {
    width: 64px;
    height: 36px;
    margin-left: 18px;
}

.tasks {
    display: flex;
    gap: 1px;
}

    .tasks button {
        width: 48px;
        height: 40px;
        display: flex;
        align-items: center;
        justify-content: center;
    }

    .tasks button:first-child {
        margin: 0 2px 0 1px;
    }

    .tasks svg {
        width: 24px;
        height: 24px;
    }

    .tasks .view {
        width: 16px;
        height: 16px;
    }

    .tasks .running {
        width: 40px;
        margin: 0 4px;
        padding-top: 2px;
        border-bottom: 2px solid #76b9ed;
    }

.tray {
    display: flex;
    align-items: center;
    margin-left: auto;
}

    .tray button {
        width: 24px;
        height: 40px;
    }

    .tray svg {
        display: block;
        width: 16px;
        height: 16px;
        margin: 0 auto;
        fill: none;
        stroke: white;
    }

    .tray button:first-child svg {
        width: 12px;
        height: 12px;
    }

    .tray .clock {
        width: 64px;
        line-height: 18px;
    }

.clock time {
    display: block;
}

.tray .notes {
    width: 40px;
}

.tray .show-desktop {
    width: 5px;
    margin-left: 8px;
    border-left: 1px solid #4a5560;
}
```
